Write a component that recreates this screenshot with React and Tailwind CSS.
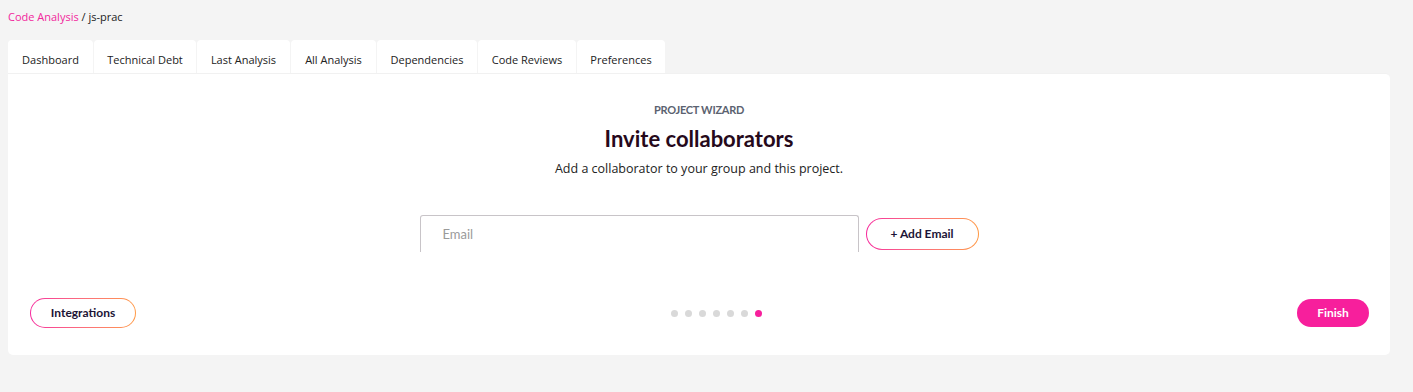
const tabs = ['Dashboard', 'Technical Debt', 'Last Analysis', 'All Analysis', 'Dependencies', 'Code Reviews', 'Preferences']
const tabWidths = ['w-[85px]', 'w-[102px]', 'w-[93px]', 'w-[85px]', 'w-[100px]', 'w-[98px]', 'w-[88px]']

function GradientButton({ children, className }) {
  return (
    <div className={`rounded-full bg-gradient-to-r from-[#f6289c] to-[#ff9a45] p-px ${className}`}>
      <div className="flex h-full w-full items-center justify-center rounded-full bg-white text-[12px] font-bold text-[#1c1436] [font-family:Lato,sans-serif]">
        {children}
      </div>
    </div>
  )
}

export default function App() {
  return (
    <div className="min-h-[392px] bg-[#f4f4f4] px-2 pt-[9px] [font-family:'Open_Sans',sans-serif]">
      <div className="text-[11px] leading-4 text-[#222]">
        <span className="text-[#f2279c]">Code Analysis</span> / js-prac
      </div>

      <div className="mt-[15px] flex gap-px">
        {tabs.map((t, i) => (
          <div
            key={t}
            className={`${tabWidths[i]} flex h-[33px] items-center justify-center rounded-t-[4px] bg-white pt-[7px] text-[11px] text-[#222]`}
          >
            {t}
          </div>
        ))}
      </div>

      <div className="mr-[15px] h-[282px] rounded-b-[5px] rounded-tr-[5px] bg-white border-t border-[#f1f1f1] pt-[28px]">
        <div className="text-center text-[11px] font-bold tracking-tight text-[#5b6270] [font-family:Lato,sans-serif]">PROJECT WIZARD</div>
        <h1 className="mt-[6px] text-center text-[22px] font-bold leading-7 text-[#26091b] [font-family:Lato,sans-serif]">Invite collaborators</h1>
        <p className="mt-[7px] text-center text-[12.5px] text-[#222]">Add a collaborator to your group and this project.</p>

        <div className="mt-[37px] flex items-start justify-center gap-[7px]">
          <div className="flex h-[37px] w-[439px] items-center rounded-t-[3px] border border-b-0 border-[#c8c4c8] pl-[22px] text-[13px] text-[#9a9a9a] [font-family:Lato,sans-serif]">
            Email
          </div>
          <GradientButton className="mt-[3px] h-[32px] w-[113px]">+ Add Email</GradientButton>
        </div>

        <div className="mt-[46px] flex items-center justify-between pl-[22px] pr-[21px]">
          <GradientButton className="h-[30px] w-[106px]">Integrations</GradientButton>
          <div className="flex items-center gap-[7px]">
            {[0, 1, 2, 3, 4, 5].map((d) => (
              <div key={d} className="h-[7px] w-[7px] rounded-full bg-[#d9d9d9]" />
            ))}
            <div className="h-[7px] w-[7px] rounded-full bg-[#f71f9c]" />
          </div>
          <div className="flex h-[28px] w-[72px] items-center justify-center rounded-full bg-[#f71f9c] text-[12px] font-bold text-white [font-family:Lato,sans-serif]">
            Finish
          </div>
        </div>
      </div>
    </div>
  )
}
